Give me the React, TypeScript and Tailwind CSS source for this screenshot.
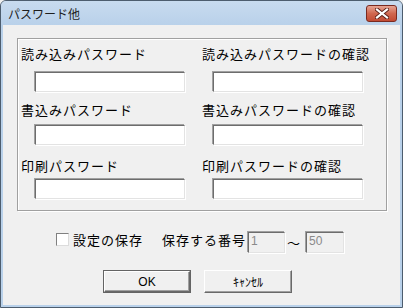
import React from "react";

const jp = "font-['Noto_Sans_CJK_JP','Noto_Sans',sans-serif]";

const rows = [
  { left: "読み込みパスワード", right: "読み込みパスワードの確認", labelTop: "mt-[7px]", inputTop: "mt-[10px]" },
  { left: "書込みパスワード", right: "書込みパスワードの確認", labelTop: "mt-[10px]", inputTop: "mt-[7px]" },
  { left: "印刷パスワード", right: "印刷パスワードの確認", labelTop: "mt-[13px]", inputTop: "mt-[5px]" },
];

// 凹んだ入力欄
function Field({ className = "", children }: { className?: string; children?: React.ReactNode }) {
  return (
    <div
      className={`border border-t-[#6d6d6d] border-l-[#6d6d6d] border-r-[#e3e3e3] border-b-[#e3e3e3] shadow-[-1px_-1px_0_#a0a0a0,1px_1px_0_#ffffff] ${className}`}
    >
      {children}
    </div>
  );
}

function CloseIcon() {
  return (
    <svg width="14" height="11" viewBox="0 0 14 11">
      <path d="M2 1.5 L12 9.5 M12 1.5 L2 9.5" stroke="#5a1e16" strokeWidth="4" strokeLinecap="square" />
      <path d="M2 1.5 L12 9.5 M12 1.5 L2 9.5" stroke="#ffffff" strokeWidth="2.2" strokeLinecap="square" />
    </svg>
  );
}

export default function App() {
  return (
    <div className="h-[308px] w-[403px] overflow-hidden bg-[#f0f0f0]">
      <div className="flex h-full w-full flex-col rounded-t-[6px] border border-[#4d5d6e] bg-[#b9d1ea]">
        {/* タイトルバー */}
        <div className="flex h-[24px] shrink-0 items-start justify-between rounded-t-[5px] bg-gradient-to-b from-[#c8dbef] to-[#b9d1ea] pl-[7px] pr-[5px]">
          <span className={`${jp} mt-[5px] text-[12px] leading-[16px] text-[#1e1e1e]`}>パスワード他</span>
          <button className="mt-[4px] flex h-[17px] w-[31px] items-center justify-center rounded-[3px] border border-[#7a2a20] bg-gradient-to-b from-[#e6a494] via-[#d0674f] to-[#c24a33]">
            <CloseIcon />
          </button>
        </div>

        {/* クライアント領域 */}
        <div className="mx-[2px] mb-[2px] flex flex-1 flex-col bg-[#f0f0f0] text-black">
          <div className="ml-[14px] mt-[13px] h-[173px] w-[370px] border border-[#a0a0a0] shadow-[inset_1px_1px_0_#ffffff,1px_1px_0_#ffffff]">
            {rows.map(row => (
              <div key={row.left} className="grid grid-cols-[182px_1fr]">
                <div className="flex flex-col">
                  <span className={`${jp} ${row.labelTop} pl-[3px] text-[13px] leading-[16px] tracking-[1px]`}>{row.left}</span>
                  <Field className={`${row.inputTop} ml-[17px] h-[20px] w-[150px] bg-white`} />
                </div>
                <div className="flex flex-col">
                  <span className={`${jp} ${row.labelTop} pl-[2px] text-[13px] leading-[16px] tracking-[1px]`}>{row.right}</span>
                  <Field className={`${row.inputTop} ml-[13px] h-[20px] w-[150px] bg-white`} />
                </div>
              </div>
            ))}
          </div>

          {/* 設定の保存 */}
          <div className={`${jp} ml-[53px] mt-[21px] flex h-[21px] items-start text-[13px] leading-[16px] tracking-[1px]`}>
            <div className="mt-[1px] h-[13px] w-[13px] border border-t-[#808080] border-l-[#808080] border-r-[#dcdcdc] border-b-[#dcdcdc] bg-white" />
            <span className="ml-[4px] mt-[0px]">設定の保存</span>
            <span className="ml-[19px]">保存する番号</span>
            <Field className="ml-[2px] h-[21px] w-[37px] bg-[#f0f0f0] pl-[2px] font-['Liberation_Sans',sans-serif] text-[12px] leading-[17px] tracking-normal text-[#8a8a8a]">
              1
            </Field>
            <span className="ml-[2px] mt-[3px] w-[14px]">〜</span>
            <Field className="ml-[5px] h-[21px] w-[38px] bg-[#f0f0f0] pl-[2px] font-['Liberation_Sans',sans-serif] text-[12px] leading-[17px] tracking-normal text-[#8a8a8a]">
              50
            </Field>
          </div>

          {/* ボタン */}
          <div className="ml-[100px] mt-[17px] flex gap-[13px]">
            <button className="h-[23px] w-[88px] border border-[#646464] bg-[#f0f0f0]">
              <div className="flex h-full w-full items-center justify-center border border-t-white border-l-white border-r-[#696969] border-b-[#696969] shadow-[inset_-1px_-1px_0_#a0a0a0] font-['Liberation_Sans',sans-serif] text-[12px]">
                OK
              </div>
            </button>
            <button className="flex h-[23px] w-[88px] items-center justify-center border border-t-white border-l-white border-r-[#696969] border-b-[#696969] bg-[#f0f0f0] shadow-[inset_-1px_-1px_0_#a0a0a0]">
              <span className={`${jp} text-[12px]`}>ｷｬﾝｾﾙ</span>
            </button>
          </div>
        </div>
      </div>
    </div>
  );
}
